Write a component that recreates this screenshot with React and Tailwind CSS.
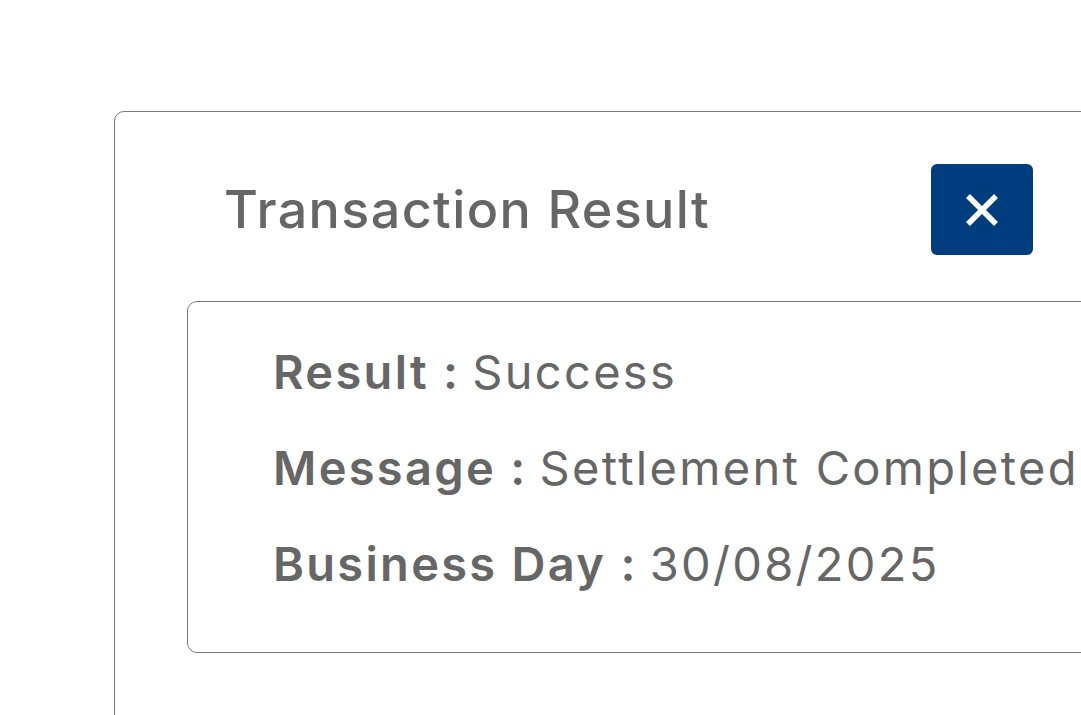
import React from 'react';

export default function App() {
  const rows = [
    { label: 'Result', value: 'Success' },
    { label: 'Message', value: 'Settlement Completed' },
    { label: 'Business Day', value: '30/08/2025' },
  ];

  return (
    <div className="h-[715px] w-[1081px] overflow-hidden bg-white font-['Inter',sans-serif] text-[#666666]">
      <div className="pl-[114px] pt-[111px]">
        <div className="w-[1100px] h-[720px] rounded-[10px] border border-[#7a7a7a] pt-[52px] pl-[72px]">
          {/* header */}
          <div className="flex items-center w-[846px] h-[91px]">
            <h1 className="pl-[37px] text-[52px] font-medium leading-none tracking-[1.4px]">Transaction Result</h1>
            <button className="ml-auto w-[102px] h-[91px] rounded-[6px] bg-[#003d7e] flex items-center justify-center">
              <svg width="34" height="34" viewBox="0 0 34 34" fill="none">
                <path d="M3 3 L31 31 M31 3 L3 31" stroke="white" strokeWidth="5.5" />
              </svg>
            </button>
          </div>

          {/* details */}
          <div className="mt-[46px] h-[352px] w-[1000px] rounded-[10px] border border-[#7a7a7a] pl-[85px] pt-[22px]">
            {rows.map((r) => (
              <div key={r.label} className="h-[96px] flex items-center text-[47px] tracking-[2.3px] whitespace-nowrap">
                <span className="font-semibold">{r.label} :</span>
                <span className="ml-[12px] font-normal">{r.value}</span>
              </div>
            ))}
          </div>
        </div>
      </div>
    </div>
  );
}
